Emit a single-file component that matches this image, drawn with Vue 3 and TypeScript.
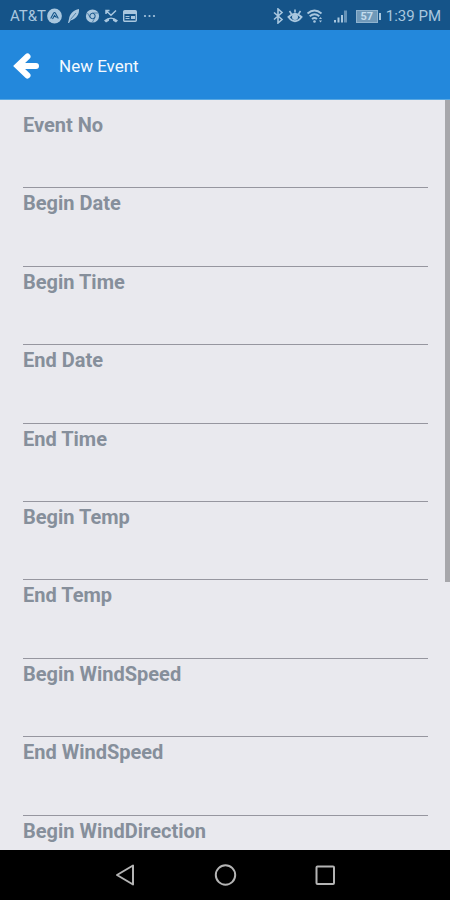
<script setup lang="ts">
import { reactive } from 'vue'

interface Field {
  id: string
  label: string
}

const fields: Field[] = [
  { id: 'event-no', label: 'Event No' },
  { id: 'begin-date', label: 'Begin Date' },
  { id: 'begin-time', label: 'Begin Time' },
  { id: 'end-date', label: 'End Date' },
  { id: 'end-time', label: 'End Time' },
  { id: 'begin-temp', label: 'Begin Temp' },
  { id: 'end-temp', label: 'End Temp' },
  { id: 'begin-wind-speed', label: 'Begin WindSpeed' },
  { id: 'end-wind-speed', label: 'End WindSpeed' },
  { id: 'begin-wind-direction', label: 'Begin WindDirection' },
]

const values = reactive<Record<string, string>>({})
</script>

<template>
  <div class="screen">
    <div class="status">
      <div class="carrier">
        <span>AT&amp;T</span>
        <div class="status-group">
          <svg class="icon" viewBox="0 0 16 16">
            <circle cx="8.500" cy="8" r="7.400" fill="currentColor" />
            <path d="M4.700 10.500 7.500 5.200q1-1.500 2 0l2.800 5.300M6.500 11l2-3.500 2 2.200" fill="none" stroke="#155489" stroke-width="1.100" />
          </svg>
          <svg class="icon" viewBox="0 0 16 16">
            <path d="M3 15 4 11C4.500 6 8.500 2 14 1c.5 5-2.500 10-8.500 11.500L4 15z" fill="currentColor" />
            <path d="M5.500 11.500 11 5" fill="none" stroke="#155489" stroke-width=".6" />
          </svg>
          <svg class="icon" viewBox="0 0 16 16">
            <circle cx="8.500" cy="8" r="6.600" fill="currentColor" />
            <circle cx="8.500" cy="8" r="2.700" fill="none" stroke="#155489" stroke-width="1" />
            <path d="M8.500 5H14M6 9.500 3.500 5M11 9.500 8.500 14" stroke="#155489" stroke-width=".6" />
          </svg>
          <svg class="icon" viewBox="0 0 16 16">
            <path d="M3 6V2.500h3.500M3.200 2.700 8 7.200l5-4.700" fill="none" stroke="currentColor" stroke-width="1.500" />
            <path d="M1 12.500q7-6 14 0l-2 2-3-1.800v-1.500q-2-.7-4 0v1.500L3 14.500z" fill="currentColor" />
          </svg>
          <svg class="icon" viewBox="0 0 16 16">
            <rect x="1.700" y="2.700" width="12.600" height="10.600" rx="1" fill="none" stroke="currentColor" stroke-width="1.400" />
            <path d="M2 3h12v3H2zM9 8h4v3H9zM3.500 8h4v1h-4zM3.500 10h4v1h-4z" fill="currentColor" />
          </svg>
          <svg class="icon" viewBox="0 0 16 16">
            <g fill="currentColor"><circle cx="4" cy="8" r="1.100" /><circle cx="8.500" cy="8" r="1.100" /><circle cx="13" cy="8" r="1.100" /></g>
          </svg>
        </div>
      </div>
      <div class="status-group">
        <svg class="icon bluetooth" viewBox="0 0 12 16">
          <path d="m2 4.500 8 7-4 3.500V1l4 3.500-8 7" fill="none" stroke="currentColor" stroke-width="1.600" />
        </svg>
        <svg class="icon" viewBox="0 0 16 16">
          <path d="M1.500 9q6.500-6.500 13 0-6.500 8.500-13 0z" fill="none" stroke="currentColor" stroke-width="2" />
          <circle cx="8" cy="9" r="3" fill="currentColor" />
          <path d="M8 1.500v3M2.500 3l2 3M13.500 3l-2 3" stroke="currentColor" stroke-width="1.600" />
        </svg>
        <svg class="icon wifi" viewBox="0 0 18 16">
          <path d="M1.500 5.500q7-6 14 0M3.700 8.300q5-4.200 9.600 0M6 11q2.600-2.200 5 0" fill="none" stroke="currentColor" stroke-width="1.900" />
          <circle cx="8.500" cy="13.500" r="1.300" fill="currentColor" />
          <path d="m13 11 1.500-2 1.500 2zM13 12.500l1.500 2 1.500-2z" fill="currentColor" />
        </svg>
        <svg class="icon signal" viewBox="0 0 16 16">
          <path d="M1 12h2v2.500H1zM4.500 9.500h2v5h-2zM8 7h2v7.500H8z" fill="currentColor" />
          <path d="M11 2.500h3v12h-3z" fill="currentColor" opacity=".55" />
        </svg>
        <span class="battery"><span class="battery-body">57</span></span>
        <span>1:39 PM</span>
      </div>
    </div>

    <header class="bar">
      <button class="back" type="button" aria-label="Back">
        <svg viewBox="0 0 28 28">
          <path d="M14.500 4.500 4.500 14l10 9.500M6 14h17" fill="none" stroke="#fff" stroke-width="6" stroke-linecap="round" />
        </svg>
      </button>
      <h1>New Event</h1>
    </header>

    <main class="content">
      <form class="form" @submit.prevent>
        <div v-for="field in fields" :key="field.id" class="field">
          <label :for="field.id">{{ field.label }}</label>
          <input :id="field.id" v-model="values[field.id]" type="text" autocomplete="off" />
        </div>
      </form>
      <div class="scroll-thumb"></div>
    </main>

    <nav class="nav">
      <button type="button" aria-label="Back">
        <svg viewBox="0 0 24 24"><path d="M20 2.500v19L4 12z" /></svg>
      </button>
      <button type="button" aria-label="Home">
        <svg viewBox="0 0 24 24"><circle cx="12.500" cy="12" r="9.700" /></svg>
      </button>
      <button type="button" aria-label="Recent apps">
        <svg viewBox="0 0 24 24"><rect x="3.500" y="3.500" width="17.500" height="17.500" rx="1" /></svg>
      </button>
    </nav>
  </div>
</template>

<style>
body {
  margin: 0;
}
</style>

<style scoped>
.screen {
  display: flex;
  flex-direction: column;
  height: 100vh;
  overflow: hidden;
  background: #e9e9ee;
  font-family: Roboto, "Liberation Sans", sans-serif;
}
.status {
  display: flex;
  flex: none;
  align-items: center;
  justify-content: space-between;
  box-sizing: border-box;
  height: 30px;
  padding: 2px 9px 0 10px;
  background: #155489;
  color: #a9c7df;
  font-size: 15px;
  line-height: 20px;
}
.carrier {
  display: flex;
  align-items: center;
}
.status-group {
  display: flex;
  align-items: center;
  gap: 3px;
}
.icon {
  width: 16px;
  height: 16px;
}
.bluetooth {
  width: 12px;
}
.wifi {
  width: 18px;
}
.signal {
  margin-left: 6px;
}
.battery {
  display: flex;
  align-items: center;
  margin: 0 2px 0 4px;
}
.battery::after {
  width: 2px;
  height: 7px;
  margin-left: 1px;
  background: #a9c7df;
  content: "";
}
.battery-body {
  width: 20px;
  border: 1px solid #8fb3cf;
  background: #7099b9;
  color: #c4dcee;
  font-size: 11px;
  font-weight: 700;
  line-height: 11px;
  text-align: center;
}
.bar {
  display: flex;
  flex: none;
  align-items: center;
  gap: 18px;
  box-sizing: border-box;
  height: 70px;
  padding: 2px 13px 0;
  border-bottom: 1px solid #59a8e2;
  background: #2388dc;
}
button {
  display: flex;
  padding: 0;
  border: 0;
  background: none;
}
.back svg {
  width: 28px;
  height: 28px;
}
h1 {
  margin: 0;
  color: #f3f9fe;
  font-size: 17px;
  font-weight: 400;
  line-height: 24px;
}
.content {
  position: relative;
  flex: 1;
  min-height: 0;
  overflow: hidden;
  padding: 10px 22px 0 23px;
}
.form {
  display: grid;
  grid-auto-rows: 1fr;
  min-height: 784px;
}
.field {
  display: flex;
  flex-direction: column;
}
label {
  color: #868f9b;
  font-size: 20px;
  font-weight: 700;
  line-height: 30px;
}
input {
  flex: 1;
  box-sizing: border-box;
  width: 100%;
  min-height: 0;
  padding: 0;
  border: 0;
  border-bottom: 1px solid #96969f;
  border-radius: 0;
  outline: 0;
  background: transparent;
  color: #4b5560;
  font: 18px Roboto, sans-serif;
}
.scroll-thumb {
  position: absolute;
  top: 0;
  right: 0;
  width: 5px;
  height: 64.3%;
  background: #a7a7ab;
}
.nav {
  display: flex;
  flex: none;
  align-items: center;
  justify-content: center;
  gap: 76px;
  height: 50px;
  background: #000;
}
.nav svg {
  width: 24px;
  height: 24px;
  fill: none;
  stroke: #b4b4b4;
  stroke-width: 2;
  stroke-linejoin: round;
}
</style>
